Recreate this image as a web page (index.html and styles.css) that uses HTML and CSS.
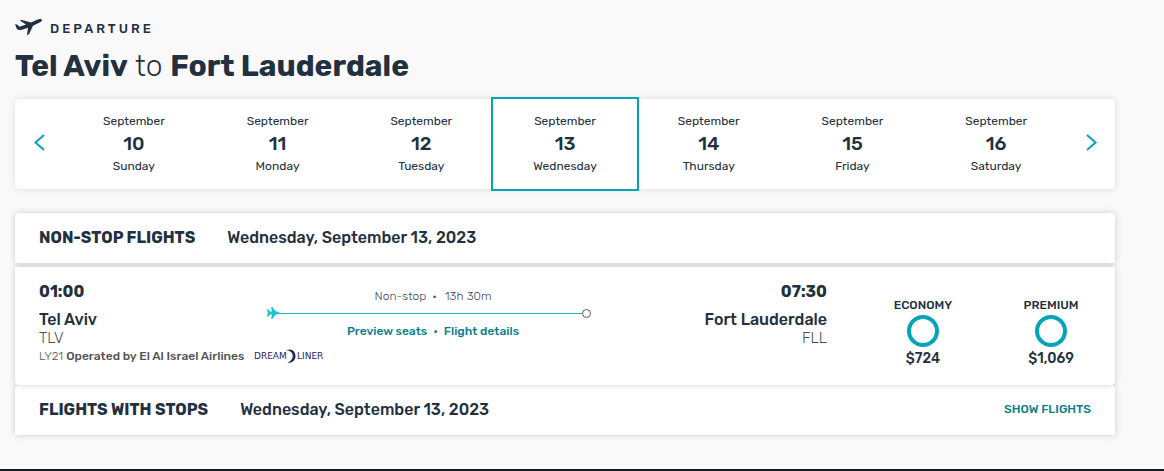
FILE: index.html
```html
<!DOCTYPE html>
<html lang="en">
<head>
    <meta charset="UTF-8">
    <meta name="viewport" content="width=device-width, initial-scale=1.0">
    <title>Departure flights</title>
    <link rel="stylesheet" href="styles.css">
</head>
<body>
    <main class="container">
        <div class="direction">
            <svg class="plane-icon" width="28" height="18" viewBox="0 0 28 18" aria-hidden="true">
                <path d="M0 6.3 L2.2 6.6 L4.6 8.8 L11 6.5 L4.8 2.6 L7 1.9 L16 4.6 L21.5 2 C24 0.9 26.5 0.7 27 2 C27.2 3.2 25.4 4.2 23 5.3 L18 7.8 L14 16.2 L12 17 L13 9.8 L6 12 C4 12.4 2.5 11.8 1.7 10.6 Z" />
            </svg>
            <span>DEPARTURE</span>
        </div>
        <h1>Tel Aviv<span class="light"> to </span>Fort Lauderdale</h1>

        <nav class="date-strip" aria-label="Departure date">
            <button class="arrow" aria-label="Previous day">
                <svg width="12" height="18" viewBox="0 0 12 18"><path d="M11 1 L2.5 8.5 L11 16" /></svg>
            </button>
            <button class="day">September<strong>10</strong>Sunday</button>
            <button class="day">September<strong>11</strong>Monday</button>
            <button class="day">September<strong>12</strong>Tuesday</button>
            <button class="day selected">September<strong>13</strong>Wednesday</button>
            <button class="day">September<strong>14</strong>Thursday</button>
            <button class="day">September<strong>15</strong>Friday</button>
            <button class="day">September<strong>16</strong>Saturday</button>
            <button class="arrow" aria-label="Next day">
                <svg width="12" height="18" viewBox="0 0 12 18"><path d="M1 1 L9.5 8.5 L1 16" /></svg>
            </button>
        </nav>

        <section class="flights">
            <header class="group-header">
                <h2>NON-STOP FLIGHTS</h2>
                <p>Wednesday, September 13, 2023</p>
            </header>

            <article class="flight">
                <div class="itinerary">
                    <div class="place">
                        <p class="time">01:00</p>
                        <p class="city">Tel Aviv</p>
                        <p class="code">TLV</p>
                    </div>
                    <div class="route">
                        <p class="duration">Non-stop<b>•</b>13h 30m</p>
                        <div class="route-line">
                            <svg width="12" height="12" viewBox="0 0 12 12" aria-hidden="true">
                                <path d="M0 2.5 H1.5 L3 4.6 H5 L4 0.3 H5.6 L8.7 4.6 H10.5 C11.6 4.8 12 5.5 12 6 C12 6.5 11.6 7.2 10.5 7.4 H8.7 L5.6 11.7 H4 L5 7.4 H3 L1.5 9.5 H0 L0.8 6 Z" />
                            </svg>
                            <span class="track"></span>
                            <span class="stop"></span>
                        </div>
                        <p class="links"><a href="#seats">Preview seats</a><b>•</b><a href="#details">Flight details</a></p>
                    </div>
                    <div class="place arrival">
                        <p class="time">07:30</p>
                        <p class="city">Fort Lauderdale</p>
                        <p class="code">FLL</p>
                    </div>
                    <div class="operator">
                        <p>LY21 <strong>Operated by El Al Israel Airlines</strong></p>
                        <svg class="dreamliner" width="72" height="14" viewBox="0 0 72 14" role="img" aria-label="Dreamliner">
                            <text x="0" y="10">DREAM</text>
                            <text x="43" y="10">LINER</text>
                            <path d="M32 1.5 C37 -1.5 41.5 2 41.5 7 C41.5 11.5 38 14.5 33.5 13.5 C41 11.5 40.5 1 32 1.5 Z" />
                        </svg>
                    </div>
                </div>
                <label class="fare">
                    <span class="cabin">ECONOMY</span>
                    <input type="radio" name="fare" value="economy">
                    <span class="price">$724</span>
                </label>
                <label class="fare">
                    <span class="cabin">PREMIUM</span>
                    <input type="radio" name="fare" value="premium">
                    <span class="price">$1,069</span>
                </label>
            </article>

            <header class="group-header">
                <h2>FLIGHTS WITH STOPS</h2>
                <p>Wednesday, September 13, 2023</p>
                <button class="show-flights">SHOW FLIGHTS</button>
            </header>
        </section>
    </main>
    <footer class="summary-bar"></footer>
</body>
</html>
```

FILE: styles.css
```css
* {
    box-sizing: border-box;
}
body {
    margin: 0;
    min-height: 100vh;
    display: flex;
    flex-direction: column;
    background-color: #f9f9f9;
    color: #22303f;
    font-family: Rubik, Roboto, sans-serif;
    font-size: 12px;
}
h1, h2, p {
    margin: 0;
}
button {
    font: inherit;
    color: inherit;
    background: none;
    border: none;
    padding: 0;
    cursor: pointer;
}
a {
    color: #0a7f8e;
    text-decoration: none;
}
.container {
    padding: 18px 49px 32px 15px;
}
.direction {
    display: flex;
    gap: 7px;
    font-size: 13px;
    font-weight: 500;
    line-height: 22px;
    letter-spacing: 3px;
}
.plane-icon {
    fill: #22303f;
}
h1 {
    margin-top: 4px;
    font-size: 30px;
    line-height: 44px;
}
.light {
    font-weight: 300;
}
.date-strip {
    display: flex;
    height: 90px;
    margin-top: 11px;
    background-color: white;
    border-radius: 4px;
    box-shadow: 0 0 6px rgba(0,0,0,0.12);
}
.arrow {
    width: 47px;
}
.arrow svg {
    fill: none;
    stroke: #00a5ba;
    stroke-width: 2;
}
.day {
    flex: 1;
    padding-bottom: 2px;
    line-height: 20px;
}
.day strong {
    display: block;
    font-size: 19px;
    font-weight: 500;
    line-height: 25px;
}
.selected {
    border: 2px solid #00a5ba;
    margin: -2px;
}
.flights {
    margin-top: 24px;
}
.group-header {
    display: flex;
    align-items: center;
    gap: 32px;
    height: 50px;
    padding: 0 24px 2px;
    background-color: white;
    border-radius: 4px 4px 0 0;
    box-shadow: 0 0 6px rgba(20,20,50,0.2);
    font-size: 16px;
    font-weight: 500;
}
h2 {
    font-size: 16px;
}
.flight {
    position: relative;
    z-index: 1;
    display: flex;
    margin-top: 4px;
    height: 118px;
    padding-left: 24px;
    background-color: white;
    border-radius: 0 0 4px 4px;
    box-shadow: 0 0 6px rgba(20,20,50,0.2);
}
.itinerary {
    flex: 1;
    display: grid;
    grid-template-columns: 1fr 332px 1fr;
    grid-template-rows: 65px 18px;
    margin: 15px 32px 0 0;
}
.time {
    margin-bottom: 8px;
    font-size: 16px;
    font-weight: 700;
    line-height: 20px;
}
.city {
    font-size: 16px;
    font-weight: 500;
    line-height: 20px;
}
.code {
    color: #4c4c4c;
    font-size: 15px;
    font-weight: 300;
    line-height: 16px;
}
.arrival {
    text-align: right;
}
.route {
    text-align: center;
}
.duration {
    margin: 4px 0 1px;
    color: #44444f;
    font-weight: 300;
    line-height: 20px;
}
.duration b {
    margin: 0 8px 0 6px;
}
.route-line {
    display: flex;
    align-items: center;
    height: 12px;
    padding-right: 8px;
}
.route-line svg {
    fill: #1fc0cf;
}
.track {
    flex: 1;
    height: 1px;
    background-color: #1fb9c8;
}
.stop {
    width: 9px;
    height: 9px;
    border: 1px solid #5c5c5c;
    border-radius: 50%;
}
.links {
    color: #0a7f8e;
    font-weight: 500;
    line-height: 24px;
}
.links b {
    margin: 0 6px;
}
.operator {
    grid-column: 1 / 3;
    display: flex;
    align-items: center;
    gap: 10px;
    color: #555;
    font-weight: 300;
}
.operator strong {
    font-weight: 500;
}
.dreamliner {
    fill: #28235c;
    font-family: "DejaVu Sans", sans-serif;
    font-size: 9px;
    font-weight: 400;
}
.fare {
    width: 128px;
    padding-top: 28px;
    display: flex;
    flex-direction: column;
    align-items: center;
    cursor: pointer;
}
.cabin {
    font-weight: 500;
    line-height: 20px;
}
.fare input {
    appearance: none;
    width: 32px;
    height: 32px;
    margin: 0;
    border: 4px solid #00a5ba;
    border-radius: 50%;
}
.price {
    font-size: 14px;
    font-weight: 500;
    line-height: 24px;
}
.show-flights {
    margin-left: auto;
    font-size: 12px;
    font-weight: 500;
    line-height: 18px;
    color: #0a7f8e;
}
.summary-bar {
    height: 2px;
    margin-top: auto;
    background-color: #101a24;
}
```
